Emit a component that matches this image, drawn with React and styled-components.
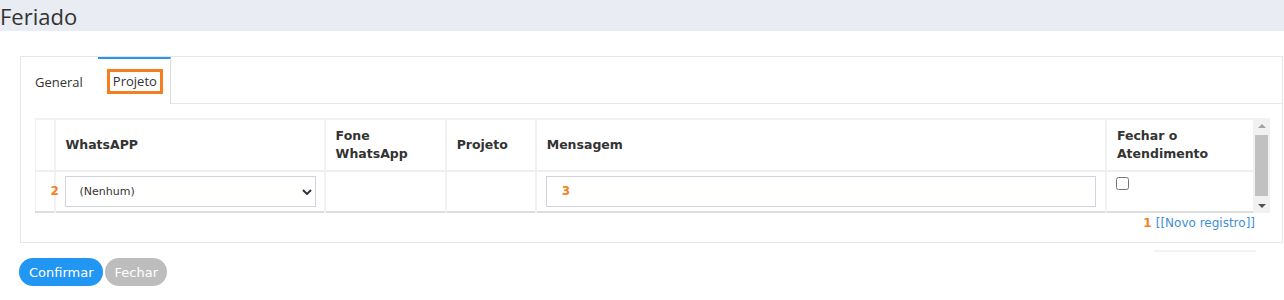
import React from 'react';
import styled, { createGlobalStyle } from 'styled-components';

const GlobalStyle = createGlobalStyle`
  body {
    margin: 0;
    background: #fff;
    font-family: 'DejaVu Sans', Verdana, sans-serif;
    color: #333;
  }
`;

const columns = [
  { key: 'num', label: '', width: 19 },
  { key: 'whats', label: 'WhatsAPP', width: 270 },
  { key: 'fone', label: ['Fone', 'WhatsApp'], width: 121 },
  { key: 'projeto', label: 'Projeto', width: 90 },
  { key: 'msg', label: 'Mensagem', width: 570 },
  { key: 'fechar', label: ['Fechar o', 'Atendimento'], width: 147 },
];

const App = () => {
  return (
    <>
      <GlobalStyle />
      <TitleBar>Feriado</TitleBar>

      <Panel>
        <TabBar>
          <Tab>General</Tab>
          <Tab $active>
            <Marked>Projeto</Marked>
          </Tab>
        </TabBar>

        <TabBody>
          <GridWrap>
            <Grid>
              <colgroup>
                {columns.map((c) => (
                  <col key={c.key} style={{ width: c.width }} />
                ))}
              </colgroup>
              <thead>
                <tr>
                  {columns.map((c) => (
                    <Th key={c.key}>
                      {Array.isArray(c.label) ? (
                        <>
                          {c.label[0]}
                          <br />
                          {c.label[1]}
                        </>
                      ) : (
                        c.label
                      )}
                    </Th>
                  ))}
                </tr>
              </thead>
              <tbody>
                <tr>
                  <Td />
                  <Td>
                    <Field>
                      <Badge $left={-14}>2</Badge>
                      <Select defaultValue="">
                        <option value="">(Nenhum)</option>
                      </Select>
                      <Chevron viewBox="0 0 10 6">
                        <path d="M1 1 L5 5 L9 1" />
                      </Chevron>
                    </Field>
                  </Td>
                  <Td />
                  <Td />
                  <Td>
                    <Field>
                      <TextInput type="text" />
                      <Badge $left={16}>3</Badge>
                    </Field>
                  </Td>
                  <Td>
                    <Check type="checkbox" />
                  </Td>
                </tr>
              </tbody>
            </Grid>

            <ScrollBar>
              <ArrowUp />
              <Thumb />
              <ArrowDown />
            </ScrollBar>
          </GridWrap>

          <NewRow>
            <Count>1</Count>
            <NewLink href="#">[[Novo registro]]</NewLink>
          </NewRow>
        </TabBody>
      </Panel>

      <FooterRule />

      <Actions>
        <Button $variant="primary">Confirmar</Button>
        <Button>Fechar</Button>
      </Actions>
    </>
  );
};

const TitleBar = styled.div`
  height: 31px;
  background: #e9ecf2;
  font-family: 'Open Sans', sans-serif;
  font-size: 22px;
  line-height: 32px;
  color: #333;
`;

const Panel = styled.div`
  margin: 25px 1px 0 20px;
  border: 1px solid #e6e6e6;
  background: #fff;
`;

const TabBar = styled.div`
  display: flex;
  height: 46px;
  border-bottom: 1px solid #e6e6e6;
`;

const Tab = styled.div`
  display: flex;
  align-items: center;
  box-sizing: border-box;
  height: 47px;
  padding: ${(p) => (p.$active ? '0 0 0 9px' : '0 15px 0 14px')};
  width: ${(p) => (p.$active ? '73px' : 'auto')};
  font-family: 'Open Sans', sans-serif;
  font-size: 13px;
  color: #333;
  background: #fff;
  border-top: 2px solid ${(p) => (p.$active ? '#2196f3' : 'transparent')};
  border-right: ${(p) => (p.$active ? '1px solid #dcdcdc' : 'none')};
`;

const Marked = styled.span`
  display: inline-block;
  padding: 2px 3px 3px 3px;
  border: 3px solid #f57f20;
  line-height: 14px;
`;

const TabBody = styled.div`
  padding: 14px 12px 11px 14px;
`;

const GridWrap = styled.div`
  display: flex;
  align-items: stretch;
`;

const Grid = styled.table`
  width: 1218px;
  table-layout: fixed;
  border-collapse: collapse;
  border-top: 2px solid #f1f1f1;
  border-left: 1px solid #eeeeee;
  border-bottom: 2px solid #dedede;
`;

const Th = styled.th`
  height: 50px;
  padding: 0 10px 0 10px;
  text-align: left;
  vertical-align: middle;
  font-size: 12.5px;
  font-weight: bold;
  line-height: 18px;
  color: #333;
  border-left: 2px solid #f1f1f1;
  border-bottom: 2px solid #efefef;
  &:first-child {
    border-left: none;
  }
`;

const Td = styled.td`
  height: 40px;
  padding: 4px 10px 4px 9px;
  vertical-align: top;
  border-left: 2px solid #f1f1f1;
  box-sizing: border-box;
  &:first-child {
    border-left: none;
  }
`;

const Field = styled.div`
  position: relative;
`;

const Select = styled.select`
  appearance: none;
  display: block;
  width: 251px;
  height: 31px;
  box-sizing: border-box;
  padding: 0 24px 0 14px;
  border: 1px solid #cfd4dc;
  border-radius: 0;
  background: #fff;
  font-family: 'DejaVu Sans', Verdana, sans-serif;
  font-size: 11px;
  color: #333;
`;

const Chevron = styled.svg`
  position: absolute;
  top: 13px;
  left: 237px;
  width: 10px;
  height: 6px;
  fill: none;
  stroke: #333;
  stroke-width: 2;
`;

const TextInput = styled.input`
  display: block;
  width: 550px;
  height: 31px;
  box-sizing: border-box;
  border: 1px solid #cfd4dc;
  padding: 0 10px;
  font-family: 'DejaVu Sans', Verdana, sans-serif;
  font-size: 12px;
`;

const Badge = styled.span`
  position: absolute;
  left: ${(p) => p.$left}px;
  top: 8px;
  font-family: 'DejaVu Sans', Verdana, sans-serif;
  font-size: 12px;
  font-weight: bold;
  color: #f57f20;
  line-height: 14px;
`;

const Check = styled.input`
  width: 13px;
  height: 13px;
  margin: 1px 0 0 0;
  display: block;
`;

const ScrollBar = styled.div`
  width: 17px;
  background: #f1f1f1;
  display: flex;
  flex-direction: column;
  align-items: center;
`;

const ArrowUp = styled.div`
  margin-top: 6px;
  width: 0;
  height: 0;
  border-left: 4px solid transparent;
  border-right: 4px solid transparent;
  border-bottom: 4px solid #a3a3a3;
`;

const Thumb = styled.div`
  margin-top: 7px;
  width: 13px;
  height: 61px;
  background: #c1c1c1;
`;

const ArrowDown = styled.div`
  margin-top: 8px;
  width: 0;
  height: 0;
  border-left: 4px solid transparent;
  border-right: 4px solid transparent;
  border-top: 4px solid #505050;
`;

const NewRow = styled.div`
  display: flex;
  justify-content: flex-end;
  align-items: baseline;
  gap: 4px;
  padding: 3px 15px 0 0;
  font-family: 'DejaVu Sans', Verdana, sans-serif;
  font-size: 12px;
  line-height: 15px;
`;

const Count = styled.span`
  font-weight: bold;
  color: #f57f20;
`;

const NewLink = styled.a`
  color: #3d8fd6;
  text-decoration: none;
`;

const FooterRule = styled.div`
  width: 102px;
  height: 2px;
  margin: 7px 28px 0 auto;
  background: #f3f3f3;
`;

const Actions = styled.div`
  display: flex;
  gap: 2px;
  margin: 6px 0 0 19px;
`;

const Button = styled.button`
  height: 28px;
  padding: 0 9px 0 10px;
  border: none;
  border-radius: 14px;
  font-family: 'DejaVu Sans', Verdana, sans-serif;
  font-size: 13px;
  color: #fff;
  background: ${(p) => (p.$variant === 'primary' ? '#2196f3' : '#bdbdbd')};
  cursor: pointer;
`;

export default App;
